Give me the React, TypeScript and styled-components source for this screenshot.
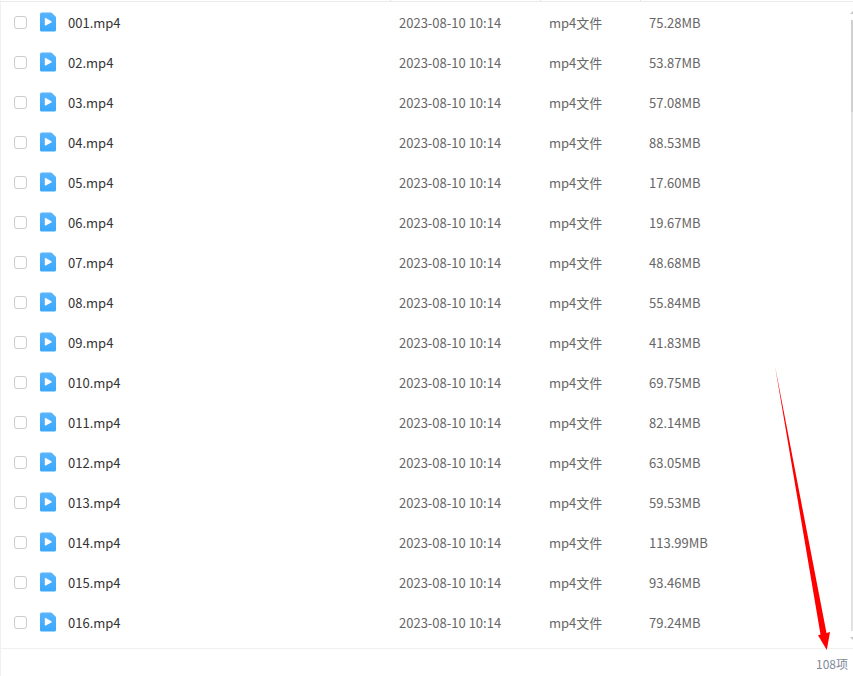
import React, { useState } from "react";
import styled, { createGlobalStyle } from "styled-components";

const GlobalStyle = createGlobalStyle`
  * { box-sizing: border-box; }
  body {
    margin: 0;
    background: #fff;
    color: #666;
    font: 13px/20px "Noto Sans CJK SC", sans-serif;
  }
`;

const Page = styled.main`
  position: relative;
  display: flex;
  flex-direction: column;
  min-height: 100vh;
  border-left: 1px solid #f0f0f0;
`;

const ListArea = styled.section`
  display: flex;
  flex: 1;
  border-bottom: 1px solid #f0f0f0;
`;

const FileTable = styled.table`
  flex: 1;
  width: 100%;
  table-layout: fixed;
  border-collapse: separate;
  border-spacing: 0;
  align-self: flex-start;
`;

const Column = styled.col<{ $width?: number }>`
  width: ${({ $width }) => ($width ? `${$width}px` : "auto")};
`;

const HeadCell = styled.td<{ $divided?: boolean }>`
  height: 2px;
  padding: 0;
  line-height: 0;
  border-bottom: 1px solid #ebebeb;
  border-left: ${({ $divided }) => ($divided ? "1px solid #e4e4e4" : "0")};
`;

const Row = styled.tr`
  height: 40px;
`;

const CheckCell = styled.td`
  padding: 0 0 0 13px;
  line-height: 0;
`;

const Checkbox = styled.input`
  appearance: none;
  display: block;
  width: 13px;
  height: 13px;
  margin: 0;
  border: 1px solid #ccc;
  border-radius: 3px;
  background: #fff;
  &:checked {
    border-color: #3fa7ff;
    background: #3fa7ff;
  }
`;

const NameCell = styled.td`
  padding: 0;
`;

const NameLabel = styled.label`
  display: flex;
  align-items: center;
  gap: 12px;
  color: #333;
`;

const FileName = styled.span`
  padding-top: 2px;
`;

const DetailCell = styled.td`
  padding: 2px 0 0 9px;
  white-space: nowrap;
`;

const Scrollbar = styled.div`
  display: flex;
  flex-direction: column;
  align-items: flex-end;
  width: 3px;
  padding: 11px 0 8px;
  gap: 6px;
  margin-left: -3px;
`;

const ScrollArrow = styled.svg`
  display: block;
  flex: none;
`;

const Track = styled.div`
  flex: 1;
  width: 2px;
  background: #e2e2e2;
`;

const Thumb = styled.div`
  height: 15%;
  background: #d0d0d0;
`;

const Footer = styled.footer`
  display: flex;
  justify-content: flex-end;
  padding: 5px 5px 2px;
  color: #818999;
  font-size: 12px;
`;

const Pointer = styled.svg`
  position: absolute;
  right: 20px;
  bottom: 26px;
  pointer-events: none;
`;

const VideoIcon = () => (
  <svg width="16" height="20" viewBox="0 0 16 20" aria-hidden="true">
    <defs>
      <linearGradient id="video-fill" x1="0" y1="0" x2="0" y2="1">
        <stop offset="0" stopColor="#58b4fc" />
        <stop offset="1" stopColor="#39a8ff" />
      </linearGradient>
    </defs>
    <path d="M2 .5h9.5L16 5v13a1.6 1.6 0 0 1-1.6 1.6H1.6A1.6 1.6 0 0 1 0 18V2.3C0 1.2.9.5 2 .5z" fill="url(#video-fill)" />
    <path d="M4.8 6.6c0-.6.4-.8.9-.5l5.7 3.2c.5.3.5.8 0 1.1l-5.7 3.2c-.5.3-.9 0-.9-.5z" fill="#fff" />
  </svg>
);

const files = [
  ["001.mp4", "75.28MB"],
  ["02.mp4", "53.87MB"],
  ["03.mp4", "57.08MB"],
  ["04.mp4", "88.53MB"],
  ["05.mp4", "17.60MB"],
  ["06.mp4", "19.67MB"],
  ["07.mp4", "48.68MB"],
  ["08.mp4", "55.84MB"],
  ["09.mp4", "41.83MB"],
  ["010.mp4", "69.75MB"],
  ["011.mp4", "82.14MB"],
  ["012.mp4", "63.05MB"],
  ["013.mp4", "59.53MB"],
  ["014.mp4", "113.99MB"],
  ["015.mp4", "93.46MB"],
  ["016.mp4", "79.24MB"],
];

export default function App() {
  const [selected, setSelected] = useState<string[]>([]);
  const toggle = (name: string) =>
    setSelected((now) => (now.includes(name) ? now.filter((n) => n !== name) : [...now, name]));

  return (
    <>
      <GlobalStyle />
      <Page>
        <ListArea>
          <FileTable>
            <colgroup>
              <Column $width={39} />
              <Column />
              <Column $width={150} />
              <Column $width={100} />
              <Column $width={213} />
            </colgroup>
            <thead>
              <tr>
                <HeadCell />
                <HeadCell />
                <HeadCell $divided />
                <HeadCell $divided />
                <HeadCell $divided />
              </tr>
            </thead>
            <tbody>
              {files.map(([name, size]) => (
                <Row key={name}>
                  <CheckCell>
                    <Checkbox
                      type="checkbox"
                      id={name}
                      checked={selected.includes(name)}
                      onChange={() => toggle(name)}
                    />
                  </CheckCell>
                  <NameCell>
                    <NameLabel htmlFor={name}>
                      <VideoIcon />
                      <FileName>{name}</FileName>
                    </NameLabel>
                  </NameCell>
                  <DetailCell>2023-08-10 10:14</DetailCell>
                  <DetailCell>mp4文件</DetailCell>
                  <DetailCell>{size}</DetailCell>
                </Row>
              ))}
            </tbody>
          </FileTable>
          <Scrollbar>
            <ScrollArrow width="3" height="3" viewBox="0 0 3 3">
              <path d="M0 3 3 0v3z" fill="#c4c4c4" />
            </ScrollArrow>
            <Track>
              <Thumb />
            </Track>
            <ScrollArrow width="3" height="3" viewBox="0 0 3 3">
              <path d="M0 0h3v3z" fill="#c4c4c4" />
            </ScrollArrow>
          </Scrollbar>
        </ListArea>
        <Footer>108项</Footer>
        <Pointer width="58" height="286" viewBox="0 0 58 286" aria-hidden="true">
          <path d="M0 2 51.5 269l3.5-1-3.2 18L43 271.2l2.5-.6z" fill="#f00" />
        </Pointer>
      </Page>
    </>
  );
}
